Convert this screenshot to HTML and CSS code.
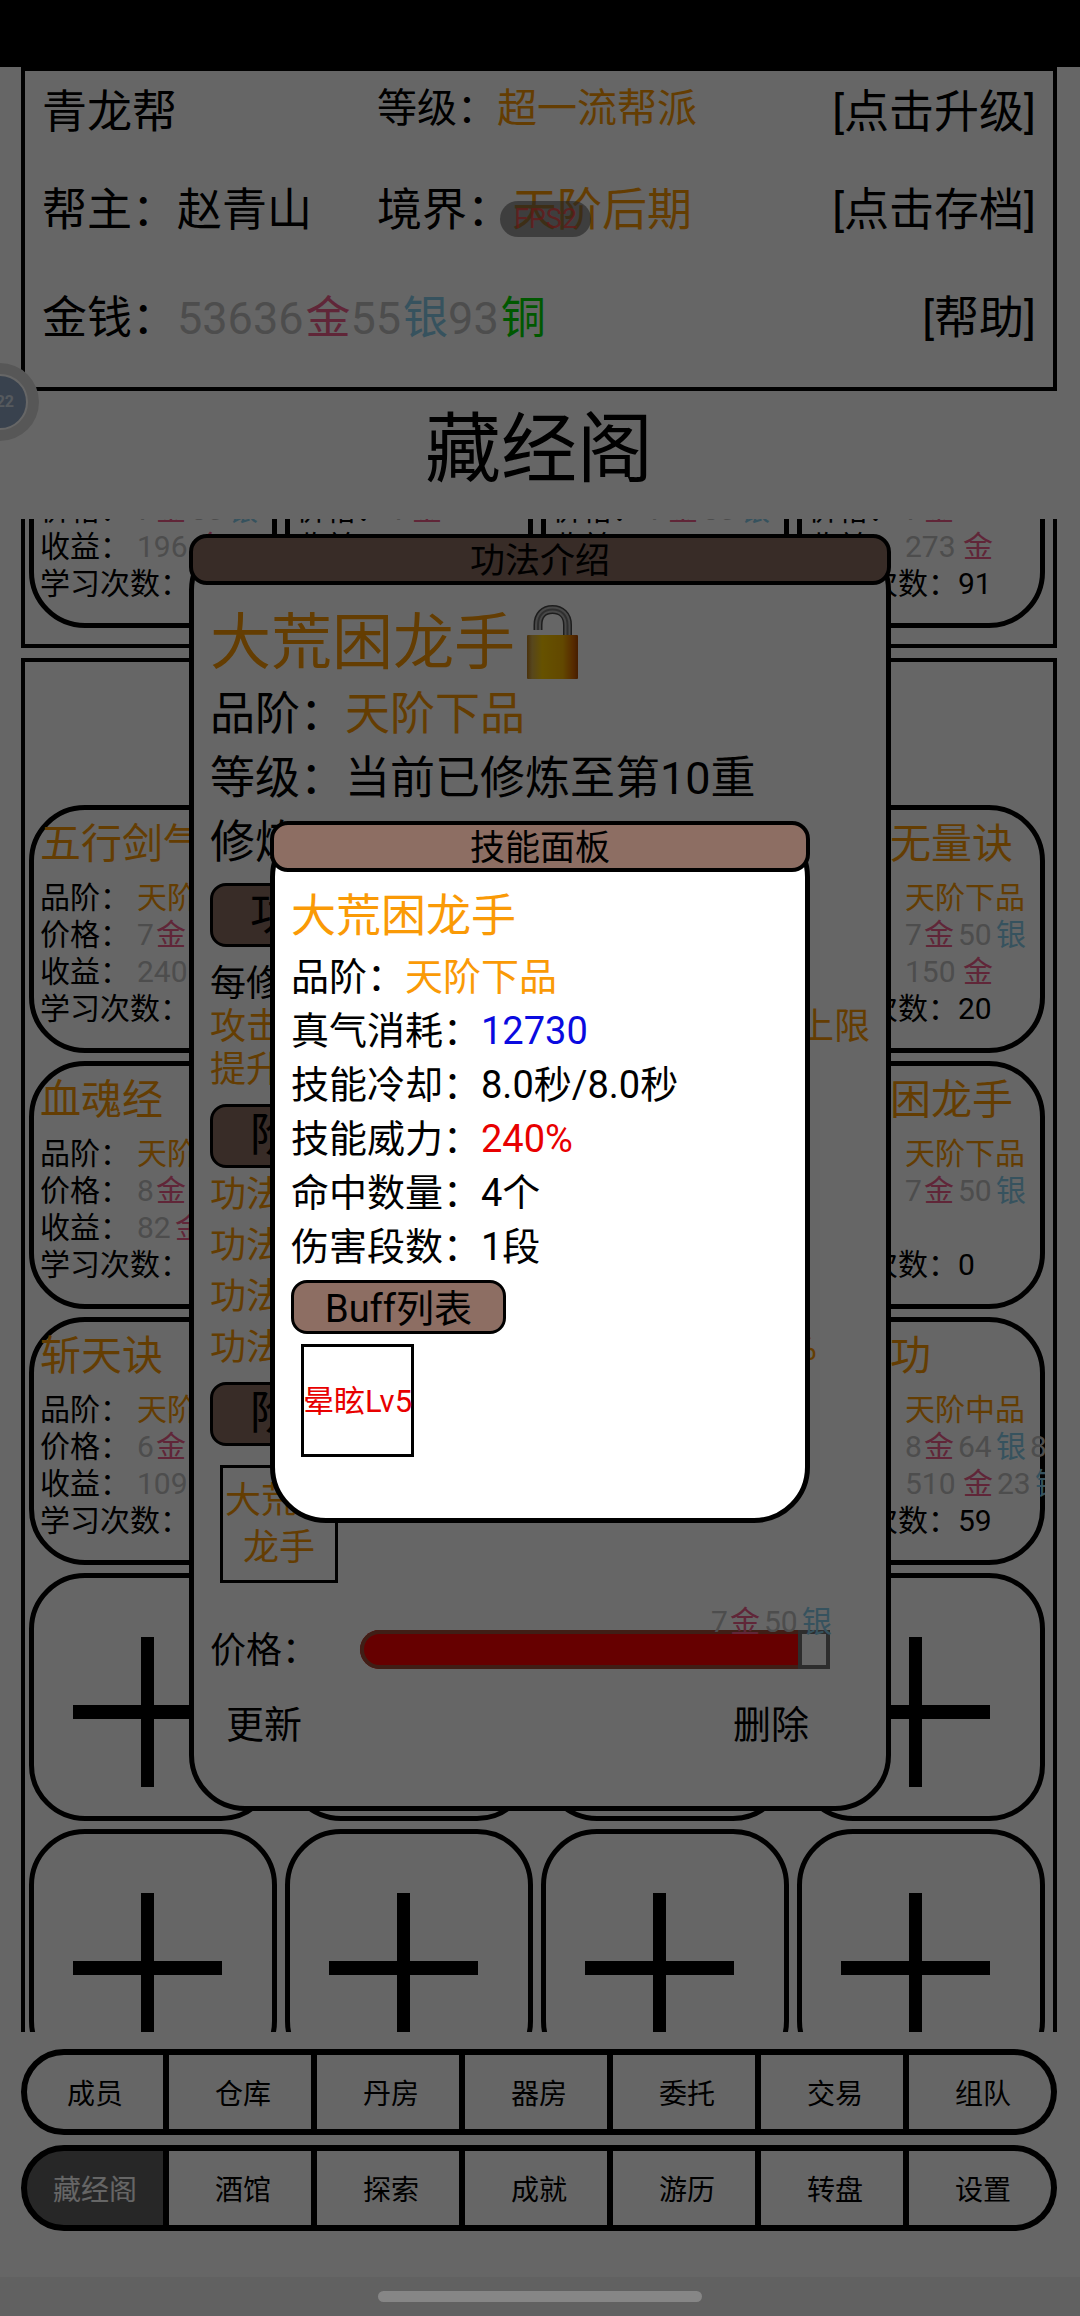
FILE: index.html
```html
<!DOCTYPE html>
<html lang="zh-CN">
<head>
<meta charset="utf-8">
<meta name="viewport" content="width=device-width, initial-scale=1">
<title>藏经阁</title>
<link rel="stylesheet" href="styles.css">
</head>
<body>
<div class="status-bar"></div>

<header class="summary">
  <span>青龙帮</span>
  <span class="summary-rank">等级：<span class="orange">超一流帮派</span></span>
  <button class="text-button" type="button">[点击升级]</button>
  <span>帮主：赵青山</span>
  <span>境界：<span class="orange">天阶后期</span></span>
  <button class="text-button" type="button">[点击存档]</button>
  <span class="summary-money">金钱：<span class="num">53636</span><span class="gold">金</span><span class="num">55</span><span class="silver">银</span><span class="num">93</span><span class="copper">铜</span></span>
  <button class="text-button" type="button">[帮助]</button>
</header>
<div class="fps">FPS2</div>
<div class="float-ball"><span>22</span></div>

<h1 class="page-title">藏经阁</h1>

<main class="library">
  <div class="library-content">
    <section class="shelf shelf-first">
      <article class="card">
        <h2></h2>
        <p></p>
        <p><span class="label">价格：</span><span class="money"><span class="num n1">7</span><span class="gold">金</span><span class="num n2">50</span><span class="silver">银</span></span></p>
        <p><span class="label">收益：</span><span class="money"><span class="num n3">196</span><span class="gold">金</span></span></p>
        <p>学习次数：</p>
      </article>
      <article class="card">
        <h2></h2>
        <p></p>
        <p><span class="label">价格：</span><span class="money"><span class="num n1">7</span><span class="gold">金</span></span></p>
        <p><span class="label">收益：</span></p>
      </article>
      <article class="card">
        <h2></h2>
        <p></p>
        <p><span class="label">价格：</span><span class="money"><span class="num n1">7</span><span class="gold">金</span><span class="num n2">50</span><span class="silver">银</span></span></p>
        <p><span class="label">收益：</span></p>
      </article>
      <article class="card">
        <h2></h2>
        <p></p>
        <p><span class="label">价格：</span><span class="money"><span class="num n1">7</span><span class="gold">金</span></span></p>
        <p><span class="label">收益：</span><span class="money"><span class="num n3">273</span><span class="gold">金</span></span></p>
        <p>学习次数：91</p>
      </article>
    </section>

    <section class="shelf shelf-main">
      <article class="card">
        <h2>五行剑气</h2>
        <p><span class="label">品阶：</span><span class="orange">天阶下品</span></p>
        <p><span class="label">价格：</span><span class="money"><span class="num n1">7</span><span class="gold">金</span></span></p>
        <p><span class="label">收益：</span><span class="money"><span class="num n3">240</span><span class="gold">金</span></span></p>
        <p>学习次数：</p>
      </article>
      <article class="card"></article>
      <article class="card"></article>
      <article class="card">
        <h2>太上无量诀</h2>
        <p><span class="label">品阶：</span><span class="orange">天阶下品</span></p>
        <p><span class="label">价格：</span><span class="money"><span class="num n1">7</span><span class="gold">金</span><span class="num n2">50</span><span class="silver">银</span></span></p>
        <p><span class="label">收益：</span><span class="money"><span class="num n3">150</span><span class="gold">金</span></span></p>
        <p>学习次数：20</p>
      </article>

      <article class="card">
        <h2>血魂经</h2>
        <p><span class="label">品阶：</span><span class="orange">天阶下品</span></p>
        <p><span class="label">价格：</span><span class="money"><span class="num n1">8</span><span class="gold">金</span></span></p>
        <p><span class="label">收益：</span><span class="money"><span class="num n2">82</span><span class="gold">金</span></span></p>
        <p>学习次数：</p>
      </article>
      <article class="card"></article>
      <article class="card"></article>
      <article class="card">
        <h2>大荒困龙手</h2>
        <p><span class="label">品阶：</span><span class="orange">天阶下品</span></p>
        <p><span class="label">价格：</span><span class="money"><span class="num n1">7</span><span class="gold">金</span><span class="num n2">50</span><span class="silver">银</span></span></p>
        <p><span class="label">收益：</span></p>
        <p>学习次数：0</p>
      </article>

      <article class="card">
        <h2>斩天诀</h2>
        <p><span class="label">品阶：</span><span class="orange">天阶下品</span></p>
        <p><span class="label">价格：</span><span class="money"><span class="num n1">6</span><span class="gold">金</span></span></p>
        <p><span class="label">收益：</span><span class="money"><span class="num n3">109</span><span class="gold">金</span></span></p>
        <p>学习次数：</p>
      </article>
      <article class="card"></article>
      <article class="card"></article>
      <article class="card">
        <h2>混元功</h2>
        <p><span class="label">品阶：</span><span class="orange">天阶中品</span></p>
        <p><span class="label">价格：</span><span class="money"><span class="num n1">8</span><span class="gold">金</span><span class="num n2">64</span><span class="silver">银</span><span class="num n1">8</span></span></p>
        <p><span class="label">收益：</span><span class="money"><span class="num n3">510</span><span class="gold">金</span><span class="num n2">23</span><span class="silver">银</span></span></p>
        <p>学习次数：59</p>
      </article>

      <button class="card add" type="button" aria-label="添加功法"><svg viewBox="0 0 149 150"><path d="M68 0h13v68h68v14H81v68H68V82H0V68h68z"/></svg></button>
      <button class="card add" type="button" aria-label="添加功法"><svg viewBox="0 0 149 150"><path d="M68 0h13v68h68v14H81v68H68V82H0V68h68z"/></svg></button>
      <button class="card add" type="button" aria-label="添加功法"><svg viewBox="0 0 149 150"><path d="M68 0h13v68h68v14H81v68H68V82H0V68h68z"/></svg></button>
      <button class="card add" type="button" aria-label="添加功法"><svg viewBox="0 0 149 150"><path d="M68 0h13v68h68v14H81v68H68V82H0V68h68z"/></svg></button>
      <button class="card add" type="button" aria-label="添加功法"><svg viewBox="0 0 149 150"><path d="M68 0h13v68h68v14H81v68H68V82H0V68h68z"/></svg></button>
      <button class="card add" type="button" aria-label="添加功法"><svg viewBox="0 0 149 150"><path d="M68 0h13v68h68v14H81v68H68V82H0V68h68z"/></svg></button>
      <button class="card add" type="button" aria-label="添加功法"><svg viewBox="0 0 149 150"><path d="M68 0h13v68h68v14H81v68H68V82H0V68h68z"/></svg></button>
      <button class="card add" type="button" aria-label="添加功法"><svg viewBox="0 0 149 150"><path d="M68 0h13v68h68v14H81v68H68V82H0V68h68z"/></svg></button>
    </section>
  </div>
</main>

<nav class="tabs">
  <div class="tab-row">
    <button type="button">成员</button>
    <button type="button">仓库</button>
    <button type="button">丹房</button>
    <button type="button">器房</button>
    <button type="button">委托</button>
    <button type="button">交易</button>
    <button type="button">组队</button>
  </div>
  <div class="tab-row">
    <button type="button" class="active">藏经阁</button>
    <button type="button">酒馆</button>
    <button type="button">探索</button>
    <button type="button">成就</button>
    <button type="button">游历</button>
    <button type="button">转盘</button>
    <button type="button">设置</button>
  </div>
</nav>
<div class="gesture-bar"><span></span></div>

<div class="layer">
  <section class="dialog dialog-manual" role="dialog" aria-label="功法介绍">
    <h2 class="dialog-head">功法介绍</h2>
    <div class="manual-title">
      <span>大荒困龙手</span>
      <svg class="lock" viewBox="0 0 51 74" aria-hidden="true">
        <defs>
          <linearGradient id="lock-body" x1="0" x2="1" y1="0" y2="0">
            <stop offset="0" stop-color="#b87c1c"/>
            <stop offset=".1" stop-color="#d9b04a"/>
            <stop offset=".3" stop-color="#ffcc00"/>
            <stop offset=".7" stop-color="#f5b400"/>
            <stop offset=".9" stop-color="#d96c00"/>
            <stop offset="1" stop-color="#b04a00"/>
          </linearGradient>
        </defs>
        <path d="M11 25V20C11 10 17 4.500 25.500 4.500S40.500 10 40.500 20V31" fill="none" stroke="#4a4a4a" stroke-width="9"/>
        <path d="M11 25V20C11 10 17 4.500 25.500 4.500S40.500 10 40.500 20V31" fill="none" stroke="#b4b4b4" stroke-width="6"/>
        <path d="M11 25V20C11 10 17 4.500 25.500 4.500S40.500 10 40.500 20V31" fill="none" stroke="#777" stroke-width="2"/>
        <rect x="0" y="30" width="51" height="44" rx="1" fill="url(#lock-body)"/>
      </svg>
    </div>
    <p class="manual-row">品阶：<span class="orange">天阶下品</span></p>
    <p class="manual-row">等级：当前已修炼至第10重</p>
    <p class="manual-row">修炼：</p>
    <h3 class="chip">功法效果</h3>
    <p class="manual-text manual-intro">每修炼一重</p>
    <p class="manual-text orange split"><span>攻击</span><span>上限</span></p>
    <p class="manual-text orange">提升</p>
    <h3 class="chip chip-late">阶段效果</h3>
    <ul class="effects orange">
      <li>功法第三重</li>
      <li>功法第五重</li>
      <li>功法第八重</li>
      <li class="split"><span>功法第十重</span><span class="effect-end">10%</span></li>
    </ul>
    <h3 class="chip">阶段技能</h3>
    <button class="skill" type="button">大荒困龙手</button>
    <div class="price">
      <label for="price">价格：</label>
      <div class="price-field">
        <input id="price" type="range" min="0" max="750" value="750">
        <output for="price" class="money"><span class="num n1">7</span><span class="gold">金</span><span class="num n2">50</span><span class="silver">银</span></output>
      </div>
    </div>
    <div class="actions">
      <button type="button">更新</button>
      <button type="button">删除</button>
    </div>
  </section>
</div>

<div class="dim"></div>

<div class="layer layer-top">
  <section class="dialog dialog-skill" role="dialog" aria-label="技能面板">
    <h2 class="dialog-head">技能面板</h2>
    <h3 class="skill-title">大荒困龙手</h3>
    <p class="skill-row">品阶：<span class="orange">天阶下品</span></p>
    <p class="skill-row">真气消耗：<span class="blue">12730</span></p>
    <p class="skill-row">技能冷却：8.0秒/8.0秒</p>
    <p class="skill-row">技能威力：<span class="red">240%</span></p>
    <p class="skill-row">命中数量：4个</p>
    <p class="skill-row">伤害段数：1段</p>
    <h3 class="chip chip-buff">Buff列表</h3>
    <button class="buff" type="button">晕眩Lv5</button>
  </section>
</div>
</body>
</html>
```
FILE: styles.css
```css
* {
  box-sizing: border-box;
}

body {
  margin: 0;
  height: 100vh;
  display: flex;
  flex-direction: column;
  overflow: hidden;
  position: relative;
  background: #fff;
  color: #000;
  font-family: Roboto, "Noto Sans CJK SC", sans-serif;
  font-weight: 400;
}

h1, h2, h3, p, ul {
  margin: 0;
  padding: 0;
  font-weight: inherit;
  list-style: none;
}

button {
  margin: 0;
  padding: 0;
  border: 0;
  background: none;
  color: inherit;
  font: inherit;
}

.orange { color: #fa9a06; }
.blue { color: #0a0ae0; }
.red { color: #e80000; }
.num { color: #c0c0c0; }
.gold { color: #f0608c; }
.silver { color: #87ceeb; }
.copper { color: #00dc00; }

.status-bar {
  flex: none;
  height: 67px;
  background: #000;
}

/* Gang summary */
.summary {
  flex: none;
  display: grid;
  grid-template-columns: 335px 1fr auto;
  grid-template-rows: 78px 118px 98px;
  align-items: center;
  margin: 0 23px 0 21px;
  padding: 3px 17px 19px;
  border: 4px solid #000;
  font-size: 45px;
  line-height: 60px;
  white-space: nowrap;
}

.summary-rank {
  padding-bottom: 8px;
  font-size: 40px;
}

.summary-money { grid-column: 1 / 3; }

.summary .gold,
.summary .silver,
.summary .copper { margin-left: 2px; }

.text-button { text-align: right; }

.fps {
  position: absolute;
  left: 500px;
  top: 201px;
  width: 91px;
  height: 36px;
  border-radius: 18px;
  background: rgba(90, 90, 90, .6);
  color: rgba(255, 60, 60, .75);
  font-size: 27px;
  line-height: 36px;
  text-align: center;
}

.float-ball {
  position: absolute;
  left: -39px;
  top: 363px;
  width: 78px;
  height: 78px;
  padding: 11px;
  border-radius: 50%;
  background: #dadada;
}

.float-ball span {
  display: block;
  height: 56px;
  padding-right: 12px;
  border: 2px solid #fff;
  border-radius: 50%;
  background: #8fa6c4;
  color: #d8e0ea;
  font-size: 16px;
  font-weight: 700;
  line-height: 52px;
  text-align: right;
}

.page-title {
  flex: none;
  height: 128px;
  margin-right: 2px;
  font-size: 76px;
  line-height: 118px;
  text-align: center;
}

/* Library */
.library {
  flex: 1;
  min-height: 0;
  overflow: hidden;
  padding: 0 23px 0 21px;
}

.library-content { margin-top: -147px; }

.shelf {
  display: grid;
  grid-template-columns: repeat(4, 1fr);
  gap: 8px;
  padding: 4px 8px 16px 4px;
  border: 4px solid #000;
}

.shelf-main {
  margin-top: 10px;
  padding-top: 143px;
}

.card {
  min-width: 0;
  height: 248px;
  padding: 4px 0 0 6px;
  border: 5px solid #000;
  border-radius: 56px;
  font-size: 30px;
  line-height: 37px;
  white-space: nowrap;
}

article.card { clip-path: inset(0); }

.card h2 {
  height: 60px;
  margin-bottom: 5px;
  color: #fa9a06;
  font-size: 41px;
  line-height: 60px;
}

.card p {
  display: flex;
  height: 37px;
}

.label {
  flex: none;
  width: 97px;
}

.money {
  display: flex;
  font-size: 30px;
}

.money span {
  flex: none;
  width: 34px;
}

.money .n1 { width: 19px; }
.money .n2 { width: 38px; }
.money .n3 { width: 58px; }

.add {
  display: flex;
  padding: 59px 0 0 39px;
}

.add svg {
  flex: none;
  width: 149px;
  height: 150px;
}

/* Bottom tabs */
.tabs {
  flex: none;
  display: grid;
  gap: 10px;
  margin: 17px 23px 46px 21px;
}

.tab-row {
  display: grid;
  grid-template-columns: repeat(7, 1fr);
}

.tab-row button {
  height: 86px;
  padding-left: 6px;
  border: solid #000;
  border-width: 6px 6px 6px 0;
  font-size: 28px;
}

.tab-row button:first-child {
  padding-left: 0;
  border-left-width: 6px;
  border-radius: 43px 0 0 43px;
}

.tab-row button:last-child { border-radius: 0 43px 43px 0; }

.tab-row .active {
  background: #626262;
  color: #fff;
}

.gesture-bar {
  flex: none;
  position: relative;
  z-index: 4;
  display: flex;
  justify-content: center;
  height: 39px;
  padding-top: 14px;
  background: #616161;
}

.gesture-bar span {
  width: 30%;
  height: 11px;
  border-radius: 6px;
  background: #868686;
}

/* Dialogs */
.layer {
  position: absolute;
  inset: 67px 0 39px;
  z-index: 1;
  display: flex;
  align-items: center;
  justify-content: center;
}

.dim {
  position: absolute;
  inset: 0;
  z-index: 2;
  background: rgba(0, 0, 0, .6);
}

.layer-top { z-index: 3; }

.dialog {
  padding: 0 16px;
  border: 5px solid #000;
  border-radius: 56px;
  background: #fff;
}

.dialog-head {
  height: 51px;
  margin: -5px -21px 0;
  border: 4px solid #000;
  border-radius: 18px;
  background: #8d6e63;
  font-size: 35px;
  line-height: 47px;
  text-align: center;
}

.chip {
  width: max-content;
  height: 64px;
  margin-top: 8px;
  padding: 0 37px;
  border: 3px solid #000;
  border-radius: 16px;
  background: #8d6e63;
  font-size: 45px;
  line-height: 58px;
}

.split {
  display: flex;
  justify-content: space-between;
}

.dialog-manual {
  width: 65%;
  padding-bottom: 51px;
}

.manual-title {
  display: flex;
  align-items: center;
  gap: 12px;
  height: 80px;
  margin-top: 18px;
  color: #fa9a06;
  font-size: 61px;
  line-height: 80px;
}

.lock {
  width: 51px;
  height: 74px;
  margin-bottom: 2px;
}

.manual-row {
  font-size: 45px;
  line-height: 64px;
}

.manual-text {
  font-size: 36px;
  line-height: 43px;
}

.manual-intro { margin-top: 16px; }
.chip-late { margin-top: 12px; }

.effects {
  margin-top: 2px;
  font-size: 36px;
  line-height: 51px;
}

.effect-end { margin-right: 53px; }

.skill {
  display: block;
  width: 118px;
  height: 118px;
  margin: 19px 0 0 10px;
  padding-top: 2px;
  border: 3px solid #000;
  color: #fa9a06;
  font-size: 36px;
  line-height: 47px;
}

.price {
  display: flex;
  align-items: center;
  justify-content: space-between;
  height: 39px;
  margin-top: 47px;
  padding-right: 40px;
  font-size: 36px;
}

.price label { padding-bottom: 4px; }

.price-field {
  position: relative;
  width: 470px;
  height: 39px;
}

.price-field output {
  position: absolute;
  right: -6px;
  top: -28px;
  line-height: 40px;
}

.price-field input {
  appearance: none;
  display: block;
  width: 100%;
  height: 39px;
  margin: 0;
  border-radius: 20px 0 0 20px;
  background: #f00;
  box-shadow: inset 0 0 0 4px #a04c38;
}

.price-field input::-webkit-slider-thumb {
  appearance: none;
  width: 32px;
  height: 39px;
  border: 4px solid #707070;
  background: #fff;
}

.actions {
  display: flex;
  justify-content: space-between;
  margin-top: 26px;
  padding: 0 61px 0 16px;
  font-size: 38px;
  line-height: 60px;
}

.dialog-skill {
  width: 50%;
  padding-bottom: 61px;
}

.skill-title {
  margin-top: 11px;
  color: #fa9a06;
  font-size: 45px;
  line-height: 67px;
}

.skill-row {
  font-size: 38px;
  line-height: 54px;
}

.chip-buff {
  height: 54px;
  margin-top: 6px;
  padding: 0 31px;
  font-size: 38px;
  line-height: 53px;
}

.buff {
  display: flex;
  align-items: center;
  justify-content: center;
  width: 113px;
  height: 113px;
  margin: 10px 0 0 10px;
  padding-bottom: 4px;
  border: 3px solid #000;
  color: #e80000;
  font-size: 31px;
  white-space: nowrap;
}
```
